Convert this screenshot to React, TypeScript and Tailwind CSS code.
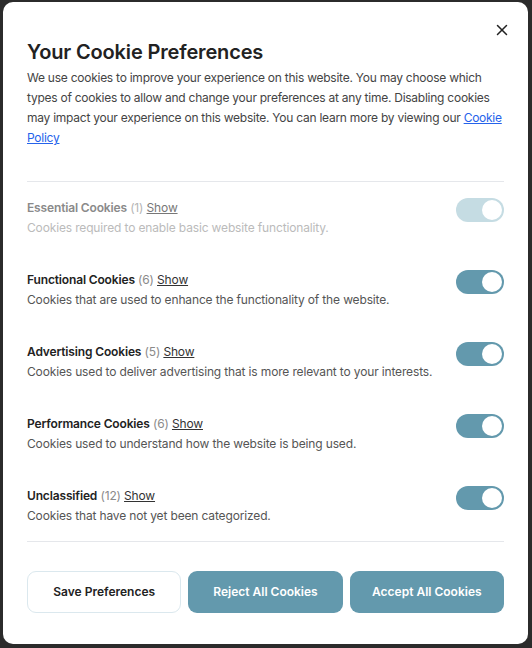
import { X } from 'lucide-react';
import { useState } from 'react';

interface Category {
  id: string;
  name: string;
  count: number;
  description: string;
  locked?: boolean;
}

const categories: Category[] = [
  {
    id: 'essential',
    name: 'Essential Cookies',
    count: 1,
    description: 'Cookies required to enable basic website functionality.',
    locked: true,
  },
  {
    id: 'functional',
    name: 'Functional Cookies',
    count: 6,
    description: 'Cookies that are used to enhance the functionality of the website.',
  },
  {
    id: 'advertising',
    name: 'Advertising Cookies',
    count: 5,
    description: 'Cookies used to deliver advertising that is more relevant to your interests.',
  },
  {
    id: 'performance',
    name: 'Performance Cookies',
    count: 6,
    description: 'Cookies used to understand how the website is being used.',
  },
  {
    id: 'unclassified',
    name: 'Unclassified',
    count: 12,
    description: 'Cookies that have not yet been categorized.',
  },
];

function Toggle({ checked, disabled, onChange }: { checked: boolean; disabled?: boolean; onChange: () => void }) {
  return (
    <button
      type="button"
      role="switch"
      aria-checked={checked}
      disabled={disabled}
      onClick={onChange}
      className={`flex h-6 w-12 shrink-0 items-center rounded-full p-[2px] ${
        disabled ? 'bg-[#c5dce3]' : 'bg-[#6399ad]'
      } ${checked ? 'justify-end' : 'justify-start'}`}
    >
      <span className="h-5 w-5 rounded-full bg-white" />
    </button>
  );
}

export default function App() {
  const [enabled, setEnabled] = useState<Record<string, boolean>>({
    essential: true,
    functional: true,
    advertising: true,
    performance: true,
    unclassified: true,
  });

  return (
    <div
      className="flex h-[648px] w-[532px] bg-[#2b2b2b] pb-[4px] pl-[3px] pr-[4px] pt-[2px]"
      style={{ fontFamily: 'Inter, "Noto Sans", sans-serif' }}
    >
      <div className="relative flex flex-1 flex-col rounded-[10px] bg-white px-6 pt-[36px]">
        {/* close */}
        <button type="button" className="absolute right-[17px] top-[19px] text-[#222]">
          <X className="h-[18px] w-[18px]" strokeWidth={2} />
        </button>

        <h2 className="text-[20px] font-semibold leading-[28px] tracking-[-0.15px] text-[#222]">
          Your Cookie Preferences
        </h2>
        <p className="mt-[2px] text-[12px] leading-[20px] tracking-[-0.25px] text-[#444]">
          We use cookies to improve your experience on this website. You may choose which types of cookies
          to allow and change your preferences at any time. Disabling cookies may impact your experience on
          this website. You can learn more by viewing our{' '}
          <a href="#" className="text-[#2563eb] underline">
            Cookie Policy
          </a>
        </p>

        <div className="mt-[33px] border-t border-[#e5e7eb]" />

        <div className="flex flex-col gap-[32px] pt-4">
          {categories.map((c) => (
            <div key={c.id} className="flex items-start justify-between gap-4">
              <div className="text-[12px] leading-[20px] tracking-[-0.15px]">
                <div>
                  <span className={`font-semibold ${c.locked ? 'text-[#8a8a8a]' : 'text-[#222]'}`}>{c.name}</span>{' '}
                  <span className={c.locked ? 'text-[#b5b5b5]' : 'text-[#8a8a8a]'}>({c.count})</span>{' '}
                  <a href="#" className={`underline ${c.locked ? 'text-[#777]' : 'text-[#333]'}`}>
                    Show
                  </a>
                </div>
                <p className={c.locked ? 'text-[#bbbbbb]' : 'text-[#555]'}>{c.description}</p>
              </div>
              <Toggle
                checked={enabled[c.id]}
                disabled={c.locked}
                onChange={() => setEnabled((s) => ({ ...s, [c.id]: !s[c.id] }))}
              />
            </div>
          ))}
        </div>

        <div className="mt-[15px] border-t border-[#e5e7eb]" />

        <div className="mt-[29px] grid grid-cols-3 gap-[7px] text-[12px] font-semibold">
          <button type="button" className="h-[42px] rounded-[9px] border border-[#dbe8ee] bg-white text-[#222]">
            Save Preferences
          </button>
          <button type="button" className="h-[42px] rounded-[9px] bg-[#6399ad] text-white">
            Reject All Cookies
          </button>
          <button type="button" className="h-[42px] rounded-[9px] bg-[#6399ad] text-white">
            Accept All Cookies
          </button>
        </div>
      </div>
    </div>
  );
}
